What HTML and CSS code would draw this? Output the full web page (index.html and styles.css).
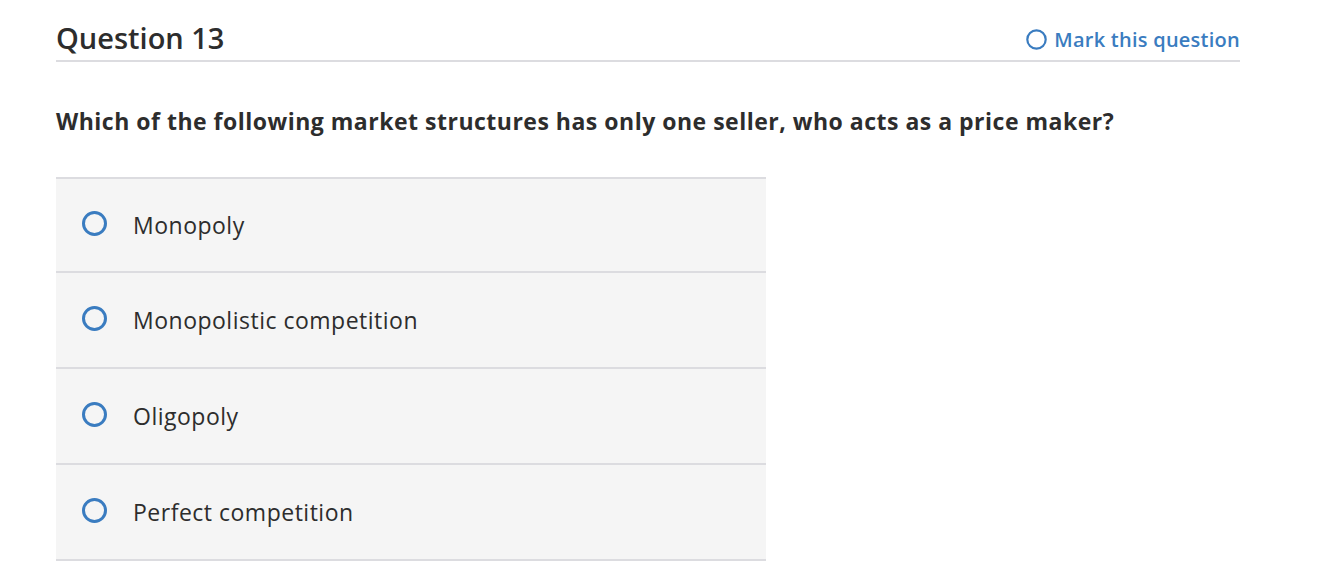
FILE: index.html
```html
<!DOCTYPE html>
<html lang="en">
<head>
<meta charset="utf-8">
<title>Question 13</title>
<link rel="stylesheet" href="styles.css">
</head>
<body>
<main class="page">
  <header class="q-header">
    <h1 class="q-title">Question 13</h1>
    <a class="mark" href="#">
      <svg class="mark-icon" width="21" height="21" viewBox="0 0 21 21" aria-hidden="true"><circle cx="10.5" cy="10.5" r="9.2" fill="none" stroke="#3a7cc0" stroke-width="2.2"/></svg>
      <span>Mark this question</span>
    </a>
  </header>
  <p class="q-text">Which of the following market structures has only one seller, who acts as a price maker?</p>
  <ul class="options">
    <li class="option">
      <span class="radio"></span>
      <span class="label">Monopoly</span>
    </li>
    <li class="option">
      <span class="radio"></span>
      <span class="label">Monopolistic competition</span>
    </li>
    <li class="option">
      <span class="radio"></span>
      <span class="label">Oligopoly</span>
    </li>
    <li class="option">
      <span class="radio"></span>
      <span class="label">Perfect competition</span>
    </li>
  </ul>
</main>
</body>
</html>
```
FILE: styles.css
```css
html, body {
  margin: 0;
  padding: 0;
  background: #ffffff;
}
body {
  font-family: "Open Sans", Lato, "Liberation Sans", sans-serif;
  color: #333333;
  font-variant-ligatures: none;
}
.page {
  width: 1184px;
  margin-left: 56px;
  padding-top: 15px;
}
.q-header {
  display: flex;
  justify-content: space-between;
  align-items: center;
  height: 45px;
  border-bottom: 2px solid #dcdce0;
}
.q-title {
  margin: 0;
  font-size: 29px;
  font-weight: 600;
  color: #2d2d2d;
  line-height: 36px;
}
.mark {
  display: flex;
  align-items: center;
  gap: 7px;
  color: #3a7cc0;
  text-decoration: none;
  font-size: 20px;
  font-weight: 600;
  letter-spacing: 0.25px;
  line-height: 26px;
  padding-top: 4px;
}
.mark-icon {
  display: block;
}
.q-text {
  margin: 0;
  padding-top: 44px;
  font-size: 23px;
  font-weight: 700;
  letter-spacing: 0.5px;
  line-height: 30px;
  color: #2d2d2d;
}
.options {
  list-style: none;
  margin: 41px 0 0 0;
  padding: 0;
  width: 710px;
  border-top: 2px solid #dcdce0;
}
.option {
  display: flex;
  align-items: center;
  height: 94px;
  padding-left: 26px;
  background: #f5f5f5;
  border-bottom: 2px solid #dcdce0;
}
.option:first-child {
  height: 92px;
}
.radio {
  width: 19px;
  height: 19px;
  margin-top: -3px;
  border: 3px solid #3a7cc0;
  border-radius: 50%;
  flex: none;
}
.label {
  margin-left: 26px;
  font-size: 23px;
  letter-spacing: 0.5px;
  line-height: 28px;
  color: #2d2d2d;
}
```
